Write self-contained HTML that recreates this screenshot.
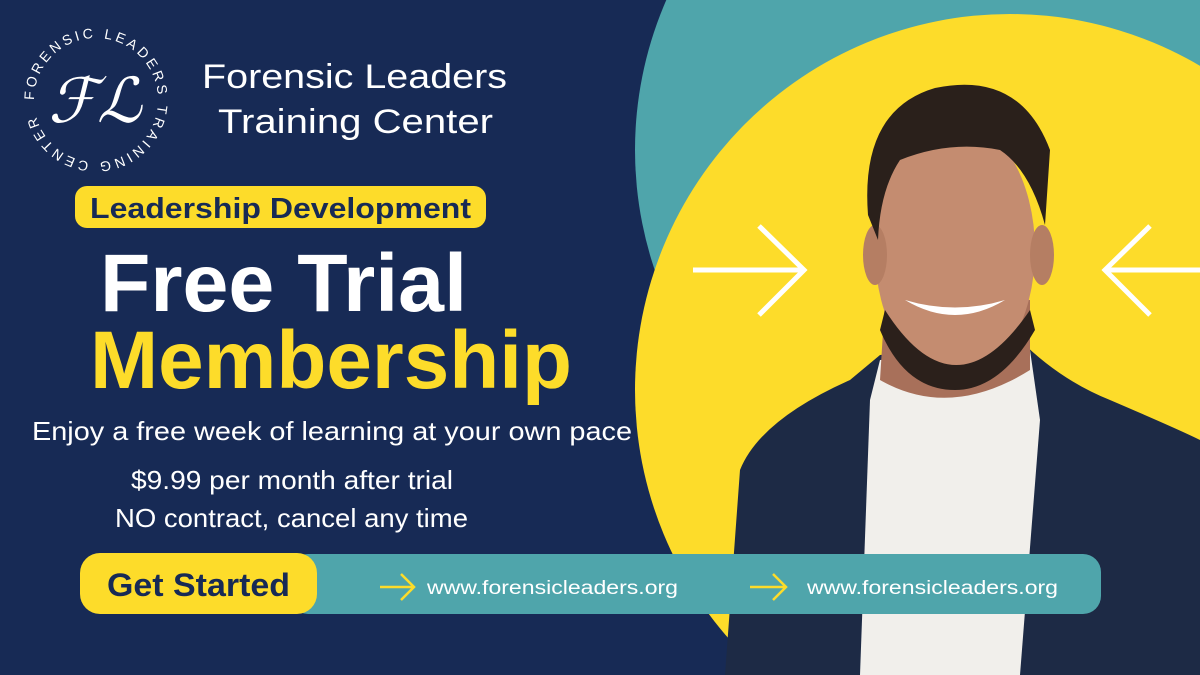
<!DOCTYPE html>
<html><head><meta charset="utf-8"><style>
html,body{margin:0;padding:0;background:#172a55;width:1200px;height:675px;overflow:hidden;}
svg{display:block}
</style></head><body>
<svg width="1200" height="675" viewBox="0 0 1200 675" xmlns="http://www.w3.org/2000/svg" font-family="Liberation Sans, sans-serif">
<rect width="1200" height="675" fill="#172a55"/>
<circle cx="1010" cy="150" r="375" fill="#4fa5ab"/>
<ellipse cx="1010" cy="390" rx="375" ry="376" fill="#fddc2a"/>
<g stroke="#fff" stroke-width="5" fill="none">
<path d="M693 270H803M759 226L804 270L759 315"/>
<path d="M1200 270H1105M1150 226L1105 270L1150 315"/>
</g>
<path d="M725 675 L740 470 Q760 420 850 380 L880 355 L1020 340 Q1060 380 1110 400 Q1180 430 1200 440 V675Z" fill="#1d2a45"/>
<path d="M870 400 L880 360 L1030 350 L1040 420 L1020 675 H860 Z" fill="#f1efeb"/>
<path d="M880 380 Q950 420 1030 370 L1030 300 L885 300Z" fill="#a8705a"/>
<ellipse cx="955" cy="250" rx="80" ry="130" fill="#c48c70"/>
<ellipse cx="875" cy="255" rx="12" ry="30" fill="#b57e63"/>
<ellipse cx="1042" cy="255" rx="12" ry="30" fill="#b57e63"/>
<path d="M885 310 Q955 420 1030 310 L1035 330 Q1000 390 955 390 Q905 390 880 330Z" fill="#2b201b"/>
<path d="M868 215 Q860 110 935 88 Q1020 70 1050 150 L1045 225 Q1030 170 1000 150 Q950 140 900 160 Q880 190 878 240Z" fill="#2a201b"/>
<path d="M905 300 Q955 330 1005 300 Q955 315 905 300Z" fill="#fff"/>
<path id="lc" d="M34 100 A62 62 0 1 1 34 100.01" fill="none"/>
<text font-size="14" fill="#fff" textLength="372" lengthAdjust="spacing"><textPath href="#lc" startOffset="0" textLength="372" lengthAdjust="spacing">FORENSIC LEADERS TRAINING CENTER</textPath></text>
<text x="95" y="122" font-family="Liberation Serif, serif" font-style="italic" font-size="62" fill="#fff" text-anchor="middle">ℱℒ</text>
<text x="202" y="88" font-size="34" fill="#fff" textLength="305" lengthAdjust="spacingAndGlyphs">Forensic Leaders</text>
<text x="218" y="133" font-size="34" fill="#fff" textLength="275" lengthAdjust="spacingAndGlyphs">Training Center</text>
<rect x="75" y="186" width="411" height="42" rx="12" fill="#fddc2a"/>
<text x="90" y="218" font-size="29" font-weight="bold" fill="#172a55" textLength="381" lengthAdjust="spacingAndGlyphs">Leadership Development</text>
<text x="100" y="311" font-size="82" font-weight="bold" fill="#fff" textLength="367" lengthAdjust="spacingAndGlyphs">Free Trial</text>
<text x="90" y="388" font-size="82" font-weight="bold" fill="#fddc2a" textLength="482" lengthAdjust="spacingAndGlyphs">Membership</text>
<text x="32" y="440" font-size="26" fill="#fff" textLength="600" lengthAdjust="spacingAndGlyphs">Enjoy a free week of learning at your own pace</text>
<text x="131" y="489" font-size="26" fill="#fff" textLength="322" lengthAdjust="spacingAndGlyphs">$9.99 per month after trial</text>
<text x="115" y="527" font-size="26" fill="#fff" textLength="353" lengthAdjust="spacingAndGlyphs">NO contract, cancel any time</text>
<rect x="290" y="554" width="811" height="60" rx="18" fill="#4fa5ab"/>
<rect x="80" y="553" width="237" height="61" rx="20" fill="#fddc2a"/>
<text x="107" y="596" font-size="32" font-weight="bold" fill="#172a55" textLength="183" lengthAdjust="spacingAndGlyphs">Get Started</text>
<g stroke="#fddc2a" stroke-width="2.5" fill="none">
<path d="M380 587H413M401 574L414 587L401 600"/>
<path d="M750 587H785M773 574L786 587L773 600"/>
</g>
<text x="427" y="594" font-size="19" fill="#fff" textLength="251" lengthAdjust="spacingAndGlyphs">www.forensicleaders.org</text>
<text x="807" y="594" font-size="19" fill="#fff" textLength="251" lengthAdjust="spacingAndGlyphs">www.forensicleaders.org</text>
</svg>
</body></html>
